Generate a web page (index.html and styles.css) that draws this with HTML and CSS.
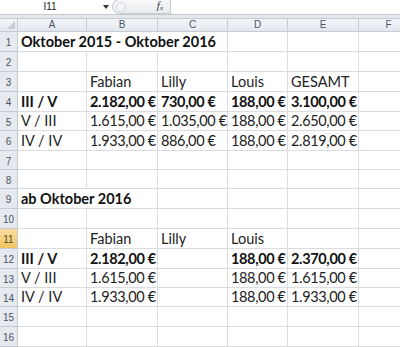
FILE: index.html
```html
<!DOCTYPE html>
<html lang="de">
<head>
<meta charset="utf-8">
<title>Tabelle</title>
<link rel="stylesheet" href="styles.css">
</head>
<body>
<div class="formula-bar">
  <div class="namebox">I11</div>
  <div class="nb-drop"><svg width="6" height="4" viewBox="0 0 6 4"><polygon points="0,0 6,0 3,4" fill="#333"/></svg></div>
  <div class="pill">
    <span class="grip"></span>
    <span class="fx">f<sub>x</sub></span>
  </div>
  <div class="input"></div>
</div>
<div class="gap"></div>
<div class="sheet">
  <div class="corner"><svg width="8" height="8" viewBox="0 0 8 8"><polygon points="8,0 8,8 0,8" fill="#c9cdd3"/></svg></div>
  <div class="ch">A</div><div class="ch">B</div><div class="ch">C</div><div class="ch">D</div><div class="ch">E</div><div class="ch">F</div>

  <div class="rh">1</div><div class="c b span3">Oktober 2015 - Oktober 2016</div><div class="c"></div><div class="c"></div><div class="c"></div>
  <div class="rh">2</div><div class="c"></div><div class="c"></div><div class="c"></div><div class="c"></div><div class="c"></div><div class="c"></div>
  <div class="rh">3</div><div class="c"></div><div class="c">Fabian</div><div class="c">Lilly</div><div class="c">Louis</div><div class="c">GESAMT</div><div class="c"></div>
  <div class="rh">4</div><div class="c b">III / V</div><div class="c b n">2.182,00 €</div><div class="c b n">730,00 €</div><div class="c b n">188,00 €</div><div class="c b n">3.100,00 €</div><div class="c"></div>
  <div class="rh">5</div><div class="c">V / III</div><div class="c n">1.615,00 €</div><div class="c n">1.035,00 €</div><div class="c n">188,00 €</div><div class="c n">2.650,00 €</div><div class="c"></div>
  <div class="rh">6</div><div class="c">IV / IV</div><div class="c n">1.933,00 €</div><div class="c n">886,00 €</div><div class="c n">188,00 €</div><div class="c n">2.819,00 €</div><div class="c"></div>
  <div class="rh">7</div><div class="c"></div><div class="c"></div><div class="c"></div><div class="c"></div><div class="c"></div><div class="c"></div>
  <div class="rh">8</div><div class="c"></div><div class="c"></div><div class="c"></div><div class="c"></div><div class="c"></div><div class="c"></div>
  <div class="rh">9</div><div class="c b span2">ab Oktober 2016</div><div class="c"></div><div class="c"></div><div class="c"></div><div class="c"></div>
  <div class="rh">10</div><div class="c"></div><div class="c"></div><div class="c"></div><div class="c"></div><div class="c"></div><div class="c"></div>
  <div class="rh sel">11</div><div class="c"></div><div class="c">Fabian</div><div class="c">Lilly</div><div class="c">Louis</div><div class="c"></div><div class="c"></div>
  <div class="rh">12</div><div class="c b">III / V</div><div class="c b n">2.182,00 €</div><div class="c"></div><div class="c b n">188,00 €</div><div class="c b n">2.370,00 €</div><div class="c"></div>
  <div class="rh">13</div><div class="c">V / III</div><div class="c n">1.615,00 €</div><div class="c"></div><div class="c n">188,00 €</div><div class="c n">1.615,00 €</div><div class="c"></div>
  <div class="rh">14</div><div class="c">IV / IV</div><div class="c n">1.933,00 €</div><div class="c"></div><div class="c n">188,00 €</div><div class="c n">1.933,00 €</div><div class="c"></div>
  <div class="rh">15</div><div class="c"></div><div class="c"></div><div class="c"></div><div class="c"></div><div class="c"></div><div class="c"></div>
  <div class="rh">16</div><div class="c"></div><div class="c"></div><div class="c"></div><div class="c"></div><div class="c"></div><div class="c"></div>
</div>
</body>
</html>
```

FILE: styles.css
```css
html, body {
  margin: 0;
  padding: 0;
  background: #ffffff;
  overflow: hidden;
  width: 400px;
  height: 347px;
}

.formula-bar {
  display: flex;
  height: 15px;
  box-sizing: border-box;
  border-bottom: 1px solid #c6cbd2;
  background: #ffffff;
  font-family: "Liberation Sans", Arial, sans-serif;
}

.namebox {
  width: 100px;
  text-align: center;
  font-size: 10px;
  line-height: 14px;
  color: #222;
}

.nb-drop {
  width: 12px;
  display: flex;
  align-items: center;
  justify-content: flex-start;
  padding-left: 3px;
  box-sizing: border-box;
}

.pill {
  width: 58px;
  box-sizing: border-box;
  display: flex;
  align-items: center;
  justify-content: space-between;
  background: linear-gradient(#f7f8f9, #e9ebee);
  border: 1px solid #c6cbd2;
  border-right: none;
  border-radius: 8px 0 0 8px;
  padding: 0 7px 0 3px;
  margin-top: -1px;
  height: 15px;
}

.grip {
  width: 8px;
  height: 8px;
  border-radius: 50%;
  border: 1px solid #d3d7dc;
  background: #f3f4f6;
}

.fx {
  font-family: "Liberation Serif", "Times New Roman", serif;
  font-style: italic;
  font-size: 11px;
  color: #333;
  line-height: 11px;
}

.fx sub {
  font-size: 7px;
  vertical-align: -1px;
}

.input {
  flex: 1;
  border-left: 1px solid #c6cbd2;
  background: #ffffff;
}

.gap {
  height: 3px;
  background: #e3e7ec;
}

.sheet {
  display: grid;
  grid-template-columns: 18px 69px 71px 70px 60px 71px 60px;
  grid-template-rows: 14px 20px 20px 20px 20px 19px 20px 19px 19px 20px 20px 20px 20px 19px 19px 20px 20px;
  width: 419px;
}

.corner, .ch, .rh {
  box-sizing: border-box;
  background: linear-gradient(#f3f5f8, #e3e7ed);
  border-right: 1px solid #c6cbd2;
  border-bottom: 1px solid #c6cbd2;
  color: #4a5566;
  font-family: "Liberation Sans", Arial, sans-serif;
  font-size: 10px;
}

.corner {
  display: flex;
  align-items: flex-end;
  justify-content: flex-end;
  padding: 0 2px 2px 0;
  border-top: 1px solid #c6cbd2;
}

.ch {
  display: flex;
  align-items: center;
  justify-content: center;
  border-top: 1px solid #c6cbd2;
  line-height: 12px;
}

.rh {
  display: flex;
  align-items: center;
  justify-content: center;
  background: #e6e9ee;
  padding-top: 2px;
}

.rh.sel {
  background: linear-gradient(#f9dea0, #f1c461);
  color: #5a4a22;
}

.c {
  box-sizing: border-box;
  border-right: 1px solid #dadcdf;
  border-bottom: 1px solid #dadcdf;
  display: flex;
  align-items: flex-end;
  padding: 0 0 1px 3px;
  font-family: Lato, "Liberation Sans", sans-serif;
  font-size: 14.5px;
  line-height: 17px;
  color: #222;
  white-space: nowrap;
  overflow: hidden;
}

.c.n {
  letter-spacing: -0.35px;
}

.c.b {
  font-weight: bold;
  color: #111;
}

.span3 {
  grid-column: span 3;
}

.span2 {
  grid-column: span 2;
}
```
